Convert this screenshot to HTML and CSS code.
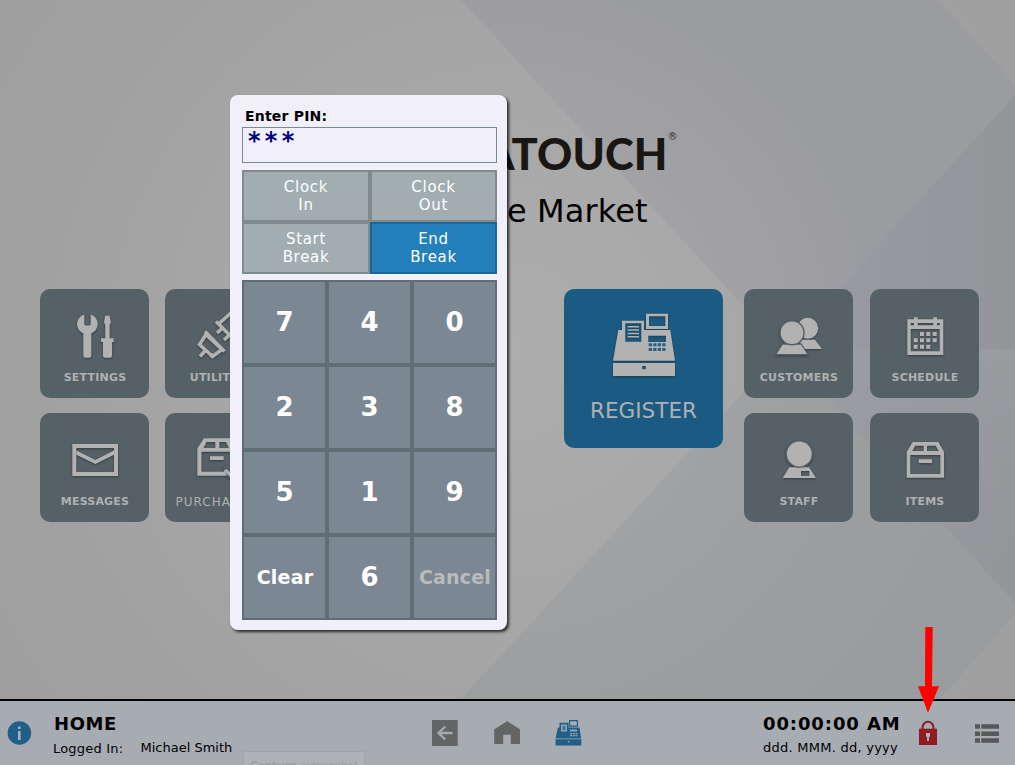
FILE: index.html
```html
<!DOCTYPE html>
<html lang="en">
<head>
<meta charset="utf-8">
<title>Home</title>
<link rel="stylesheet" href="styles.css">
</head>
<body>
<div class="screen">
  <svg class="backdrop" viewBox="0 0 1015 699" aria-hidden="true">
    <defs>
      <radialGradient id="glow" gradientUnits="userSpaceOnUse" cx="507" cy="350" r="620">
        <stop offset="0" stop-color="#adadad"/><stop offset=".3" stop-color="#a9a9a9"/><stop offset=".75" stop-color="#a1a1a1"/><stop offset="1" stop-color="#9f9f9f"/>
      </radialGradient>
      <radialGradient id="upper" gradientUnits="userSpaceOnUse" cx="507" cy="350" r="620">
        <stop offset="0" stop-color="#a6a7aa"/><stop offset=".45" stop-color="#a0a0a4"/><stop offset=".6" stop-color="#9b9c9f"/><stop offset="1" stop-color="#9b9c9f"/>
      </radialGradient>
      <radialGradient id="lower" gradientUnits="userSpaceOnUse" cx="507" cy="350" r="620">
        <stop offset="0" stop-color="#a5a8aa"/><stop offset=".5" stop-color="#9d9fa1"/><stop offset=".8" stop-color="#999d9f"/><stop offset="1" stop-color="#989c9e"/>
      </radialGradient>
      <linearGradient id="side" x1="0" y1="0" x2="1" y2="0">
        <stop offset="0" stop-color="#9b9ca4"/><stop offset="1" stop-color="#939599"/>
      </linearGradient>
      <linearGradient id="sheen" x1="0" y1="0" x2="0" y2="1">
        <stop offset="0" stop-color="#9a9ea1" stop-opacity=".75"/><stop offset="1" stop-color="#96989d" stop-opacity="0"/>
      </linearGradient>
    </defs>
    <rect width="1015" height="699" fill="url(#glow)"/>
    <path d="M461 0H938L1015 84V95L783 349Z" fill="url(#upper)"/>
    <path d="M461 699L783 349L1015 603V614L940 699Z" fill="url(#lower)"/>
    <path d="M1015 95V603L783 349Z" fill="url(#side)"/>
    <path d="M783 349H1015V603Z" fill="url(#sheen)"/>
  </svg>

  <main class="home">
    <header class="brand">
      <div class="logo">ATOUCH<span class="reg">®</span></div>
      <div class="store">e Market</div>
    </header>
    <div class="menu">
      <div class="group">
        <div class="tile">
          <svg viewBox="40 289 109 80" class="art">
            <path d="M84.3 314.5V324Q84.3 325.6 86 325.6H89Q90.7 325.6 90.7 324V314.5Q97.5 317 97.7 324Q97.5 330.5 91.3 333.2V355.5Q91.3 357.7 89 357.7H85.600Q83.3 357.7 83.3 355.5V333.2Q77.200 330.500 77 324Q77.300 317 84.300 314.500Z"/>
            <path d="M105.200 315.800H109.600L110.900 322.500L109.600 325V338.300H113.700V342H112V355.500Q112 357.700 110 357.700H105Q103 357.700 103 355.500V342H101V338.300H105.300V325L104 322.500Z"/>
          </svg>
          <span class="label">SETTINGS</span>
        </div>
        <div class="tile">
          <svg viewBox="165 289 109 80" class="art line">
            <path d="M206 334.500L222 349.500L212.500 356.500L199.500 344.500Z"/>
            <path d="M205 331.500L224.500 351.500M200 356.500L205 351M211 357.500L213.500 354"/>
            <path d="M216 321.500L234 339.500M218.500 324L232 312M217 333L223 327.500M224 340L230 334.500"/>
          </svg>
          <span class="label">UTILITIES</span>
        </div>
        <div class="tile">
          <svg viewBox="40 413 109 80" class="art">
            <path fill-rule="evenodd" d="M72.300 444H118V476H72.300ZM76.300 448V472H114V448Z"/>
            <path d="M76.300 450.500L95.300 460L114 450.500V454.800L95.300 464L76.300 454.800Z"/>
          </svg>
          <span class="label">MESSAGES</span>
        </div>
        <div class="tile">
          <svg viewBox="165 413 109 80" class="art">
            <path fill-rule="evenodd" d="M204 438.300H230L236 448.500V475.700H197.300V448.500ZM206.500 442L203.500 448H215.300V442ZM219.300 442V448H229L226 442ZM201.500 451.700V471.700H232V451.700ZM210 456.300H223.700V460H210Z"/>
            <path d="M222 466H236V478H228Z" fill="#566067"/>
            <path d="M223.500 471L226.500 469L234 476V480Z"/>
          </svg>
          <span class="label plain">PURCHASING</span>
        </div>
      </div>
      <div class="tile register">
        <svg viewBox="564 289 159 100" class="art">
          <path fill-rule="evenodd" d="M646 313.700H668V329H646ZM649 316.300V326H665.300V316.300Z"/>
          <path fill-rule="evenodd" d="M622 320.700H644V330H670.300L675 360.700H613L618.300 330H622ZM625.300 323.300V341.700H641.300V323.300ZM648.300 335.700V342H666V335.700Z"/>
          <path d="M627.700 326H639V327.500H627.700ZM627.700 329.300H639V330.800H627.700ZM627.700 332.700H639V334.200H627.700ZM627.700 336H639V337.500H627.700Z"/>
          <path d="M648.700 343.300h3.300v3h-3.300zM653.200 343.300h3.300v3h-3.300zM657.700 343.300h3.300v3h-3.300zM662.200 343.300h3.300v3h-3.300zM648.700 348h3.300v3h-3.300zM653.200 348h3.300v3h-3.300zM657.700 348h3.300v3h-3.300zM662.200 348h3.300v3h-3.300z" fill="#2b5e84"/>
          <path fill-rule="evenodd" d="M613 363H675V376H613ZM642.300 366V369.300H645.700V366Z"/>
        </svg>
        <span class="label">REGISTER</span>
      </div>
      <div class="group">
        <div class="tile">
          <svg viewBox="744 289 109 80" class="art">
            <circle cx="807.700" cy="328.300" r="10.500"/>
            <path d="M801 339.700H815L822 349H799Z"/>
            <path d="M782.700 344.700H801L807 354H776.700Z" stroke="#566067" stroke-width="2.400" paint-order="stroke"/>
            <circle cx="792" cy="332.800" r="11.300" stroke="#566067" stroke-width="3" paint-order="stroke"/>
          </svg>
          <span class="label">CUSTOMERS</span>
        </div>
        <div class="tile">
          <svg viewBox="870 289 109 80" class="art">
            <path fill-rule="evenodd" d="M907.300 319.300H914V317.300H917.700V319.300H933.300V317.300H937V319.300H943.300V355H907.300ZM910.700 323V325.300H914V323ZM917.700 323V325.300H933.300V323ZM937 323V325.300H939.700V323ZM910.700 329V351.300H939.700V329Z"/>
            <path d="M920 332h4v4h-4zM926.300 332h4v4h-4zM932.700 332h4v4h-4zM913.700 338.300h4v4h-4zM920 338.300h4v4h-4zM926.300 338.300h4v4h-4zM932.700 338.300h4v4h-4zM913.700 344.700h4v4h-4zM920 344.700h4v4h-4zM926.300 344.700h4v4h-4z"/>
          </svg>
          <span class="label">SCHEDULE</span>
        </div>
        <div class="tile">
          <svg viewBox="744 413 109 80" class="art">
            <path fill-rule="evenodd" d="M789.300 467.300H809L816 478H782.700ZM801 471V476H809.300V471Z"/>
            <circle cx="799.300" cy="454" r="12.400" stroke="#566067" stroke-width="3" paint-order="stroke"/>
          </svg>
          <span class="label">STAFF</span>
        </div>
        <div class="tile">
          <svg viewBox="870 413 109 80" class="art">
            <path fill-rule="evenodd" d="M912.700 442H938.300L944 451.700V477.700H906.700V451.700ZM915.300 445.700L912.300 451H923.700V445.700ZM927 445.700V451H938.700L935.700 445.700ZM910.300 455V474H940.300V455ZM918.700 459.300H932V463H918.700Z"/>
          </svg>
          <span class="label">ITEMS</span>
        </div>
      </div>
    </div>
  </main>

  <footer class="bar">
    <svg class="info" viewBox="7 720 25 26"><circle cx="19.400" cy="733" r="11.800" fill="#215f89"/><path d="M18 726.500h2.600v2.500h-2.600zM18 731h2.600v9h-2.600z" fill="#a5b2bf"/></svg>
    <div class="where">
      <div class="title">HOME</div>
      <div class="user"><span class="logged">Logged In:</span><span class="name">Michael Smith</span></div>
    </div>
    <nav class="nav">
      <svg width="26" height="26" viewBox="432 720 26 26"><path d="M432 720h25.700v26H432z" fill="#636465"/><path d="M452.700 733H438.500M445.300 726.500L438.500 733L445.300 739.500" fill="none" stroke="#a5a9b0" stroke-width="2.300"/></svg>
      <svg width="26" height="26" viewBox="493.500 720 26 26"><path d="M506.700 721.300L519.700 729.300V744H510.300V734.700H502.700V744H493.700V729.300Z" fill="#636465"/></svg>
      <svg width="27" height="26" viewBox="555.500 720 27 26"><path fill-rule="evenodd" d="M569.500 720H578.500V726.700H569.500ZM570.700 721.200V725.500H577.300V721.200ZM560 722.700H569V727.500H580L581.700 738.500H556L558.500 727.500H560ZM556 739.300H581.800V745.500H556Z" fill="#215f89"/><path d="M561.500 724.500h6v7h-6zM570.500 729.500h7v2h-7zM570.500 733h2v1.300h-2zM573.200 733h2v1.300h-2zM575.900 733h2v1.300h-2zM570.500 735h2v1.300h-2zM573.200 735h2v1.300h-2zM575.900 735h2v1.300h-2zM568.300 741h1.500v1.500h-1.500z" fill="#94a6b5"/><path d="M563 726h3v4h-3z" fill="#426f91"/></svg>
    </nav>
    <div class="clock">
      <div class="time">00:00:00 AM</div>
      <div class="date">ddd. MMM. dd, yyyy</div>
    </div>
    <svg class="lock" viewBox="918 720 20 26"><path d="M922.500 730V727.500A5.500 5.700 0 0 1 933.500 727.500V730" fill="none" stroke="#8f1c24" stroke-width="2"/><path d="M919 728.700h18V745h-18z" fill="#8f1c24"/><path d="M926 733h4v3.700h-1v4.300h-2v-4.300h-1z" fill="#b0b1b8"/></svg>
    <svg class="list" viewBox="974 723 26 21"><path d="M975 724.300h5v4.500h-5zM981.200 724.300H999v4.500h-17.800zM975 731.500h5v4.500h-5zM981.200 731.500H999v4.500h-17.800zM975 738.300h5v4.500h-5zM981.200 738.300H999v4.500h-17.800z" fill="#57585a"/></svg>
    <div class="hint"><b>Capture</b> screenshot</div>
  </footer>

  <svg class="pointer" viewBox="918 627 22 86"><path d="M925.300 627H932.700L932 686.300H939L928 712.700L918 686.300H925Z" fill="#fe0000"/></svg>

  <section class="dialog">
    <div class="prompt">Enter PIN:</div>
    <div class="pin">***</div>
    <div class="actions">
      <button>Clock<br>In</button><button>Clock<br>Out</button>
      <button>Start<br>Break</button><button class="active">End<br>Break</button>
    </div>
    <div class="keypad">
      <button>7</button><button>4</button><button>0</button>
      <button>2</button><button>3</button><button>8</button>
      <button>5</button><button>1</button><button>9</button>
      <button class="word">Clear</button><button>6</button><button class="word dim">Cancel</button>
    </div>
  </section>
</div>
</body>
</html>
```
FILE: styles.css
```css
* { box-sizing: border-box; }
body { margin: 0; overflow: hidden; font-family: "DejaVu Sans", Verdana, sans-serif; }
.screen { position: relative; width: 1015px; height: 765px; overflow: hidden; display: flex; flex-direction: column; }
.backdrop { position: absolute; left: 0; top: 0; width: 1015px; height: 699px; }
.home { position: relative; height: 699px; padding-top: 128px; }
.brand { height: 161px; padding-left: 484px; white-space: nowrap; }
.logo { font: 900 43.5px/50px Lato, sans-serif; color: #1a1614; letter-spacing: .1px; display: flex; }
.reg { font: 10px/17px "DejaVu Sans", sans-serif; letter-spacing: 0; color: #333; margin-left: 0; }
.store { margin-top: 14px; padding-left: 23px; font-size: 32px; line-height: 39px; letter-spacing: .1px; color: #000; }
.menu { display: flex; padding-left: 40px; align-items: flex-start; }
.group { display: grid; grid-template-columns: 109px 109px; column-gap: 16px; row-gap: 15px; }
.register + .group { column-gap: 17px; }
.tile { width: 109px; height: 109px; border-radius: 10px; background: #566067; color: #b0b1b2; display: flex; flex-direction: column; align-items: center; }
.art { display: block; width: 109px; height: 80px; fill: #b2b2b3; filter: drop-shadow(0 1px 1px rgba(30, 36, 42, .6)); }
.line { fill: none; stroke: #b2b2b3; stroke-width: 3.500; }
.label { padding-left: 1px; font-size: 11px; line-height: 18px; font-weight: bold; letter-spacing: .2px; white-space: nowrap; }
.plain { font-weight: normal; font-size: 12px; letter-spacing: 1px; }
.register { width: 159px; height: 159px; margin: 0 21px 0 290px; background: #1b5a83; }
.register .art { width: 159px; height: 100px; }
.register .label { padding-left: 0; font-size: 21.5px; line-height: 44px; font-weight: normal; letter-spacing: 0; }

.bar { position: relative; height: 66px; border-top: 2px solid #000; background: #a7acb3; display: flex; color: #000; white-space: nowrap; }
.info { width: 25px; height: 26px; margin: 19px 0 0 7px; }
.where { width: 400px; padding: 12px 0 0 21px; }
.title { font-size: 18px; line-height: 22px; font-weight: bold; letter-spacing: .6px; padding-left: 1px; }
.user { display: flex; font-size: 13px; line-height: 18px; margin-top: 4px; }
.logged { width: 87.500px; padding-top: 1px; letter-spacing: .2px; }
.nav { display: flex; gap: 35.500px; width: 331px; padding-top: 19px; }
.clock { width: 155px; padding-top: 12px; }
.time { font-size: 18px; line-height: 22px; font-weight: bold; letter-spacing: .9px; }
.date { font-size: 13px; line-height: 18px; margin-top: 4px; letter-spacing: .25px; }
.lock { width: 20px; height: 26px; margin-top: 19px; }
.list { width: 26px; height: 21px; margin: 22px 0 0 36px; }
.hint { position: absolute; left: 243px; top: 50px; width: 122px; height: 30px; border: 1px solid #a0a5ab; background: #adb1b8; color: #9a9fa6; font-size: 10.5px; line-height: 26px; padding-left: 6px; }
.pointer { position: absolute; left: 918px; top: 627px; width: 22px; height: 86px; }

.dialog { position: absolute; left: 230px; top: 95px; width: 277px; height: 535px; padding: 12px 10px 10px 12px; border-radius: 8px; background: #f0effa; box-shadow: 2px 2px 3px rgba(0, 0, 0, .75); }
.prompt { height: 20px; padding-left: 3px; font-size: 14px; line-height: 18px; font-weight: bold; letter-spacing: .2px; color: #000; }
.pin { width: 255px; height: 36px; border: 1px solid #7d8896; padding-left: 5px; font-size: 24px; line-height: 27px; font-weight: bold; letter-spacing: 4.300px; color: #000080; }
.actions { width: 255px; height: 104px; margin-top: 7px; display: grid; grid-template-columns: 128px 127px; grid-template-rows: 52px 52px; }
button { border: 2px solid #7f8b8e; margin: 0; padding: 0; color: #fff; background: #a1adb1; font: 15px/18px "DejaVu Sans", Verdana, sans-serif; letter-spacing: .7px; border-radius: 0; }
.actions .active { background: #2380ba; border-color: #1c6797; }
.keypad { width: 255px; margin-top: 6px; display: grid; grid-template-columns: repeat(3, 85px); grid-auto-rows: 85px; }
.keypad button { border-color: #5f6e75; background: #7b8893; font-size: 26px; font-weight: bold; letter-spacing: 0; padding-bottom: 1px; }
.keypad .word { font-size: 19px; letter-spacing: .2px; padding: 0 0 2px 1px; }
.keypad .dim { color: #b9bbbd; }
```
